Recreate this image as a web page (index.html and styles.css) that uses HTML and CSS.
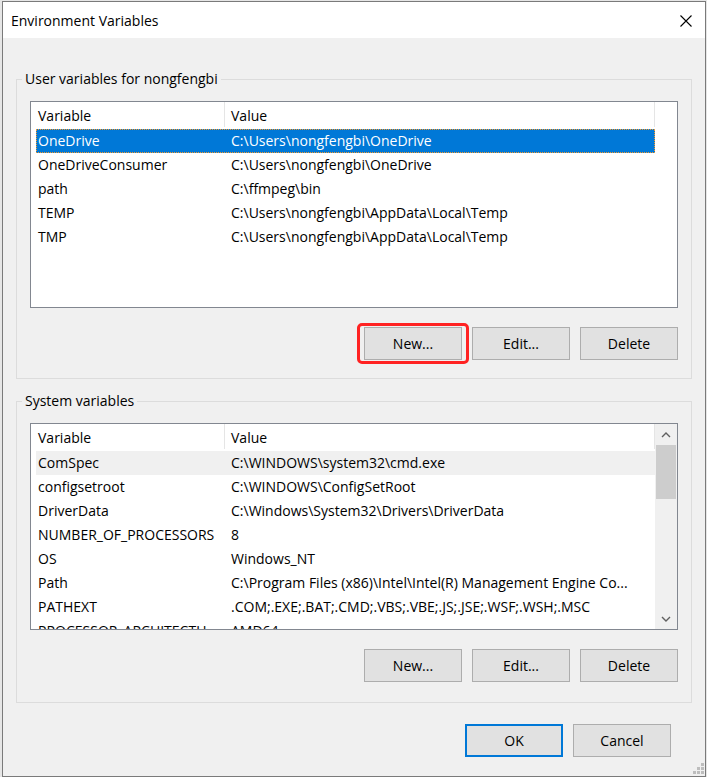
FILE: index.html
```html
<!DOCTYPE html>
<html>
<head>
<meta charset="utf-8">
<link rel="stylesheet" href="styles.css">
</head>
<body>
<div class="window">
  <div class="titlebar">
    <span class="title">Environment Variables</span>
    <svg class="close" width="12" height="12" viewBox="0 0 12 12"><path d="M0.5 0.5 L11.5 11.5 M11.5 0.5 L0.5 11.5" stroke="#000" stroke-width="1.1" fill="none"/></svg>
  </div>
  <div class="content">
    <fieldset class="group g1">
      <legend>User variables for nongfengbi</legend>
      <div class="group-body">
        <div class="list">
          <div class="cols">
            <div class="row head"><div class="c1">Variable</div><div class="c2">Value</div></div>
            <div class="row sel"><div class="c1">OneDrive</div><div class="c2">C:\Users\nongfengbi\OneDrive</div></div>
            <div class="row"><div class="c1">OneDriveConsumer</div><div class="c2">C:\Users\nongfengbi\OneDrive</div></div>
            <div class="row"><div class="c1">path</div><div class="c2">C:\ffmpeg\bin</div></div>
            <div class="row"><div class="c1">TEMP</div><div class="c2">C:\Users\nongfengbi\AppData\Local\Temp</div></div>
            <div class="row"><div class="c1">TMP</div><div class="c2">C:\Users\nongfengbi\AppData\Local\Temp</div></div>
          </div>
        </div>
        <div class="btns">
          <span class="hl"><button class="btn">New...</button></span>
          <button class="btn">Edit...</button>
          <button class="btn">Delete</button>
        </div>
      </div>
    </fieldset>
    <fieldset class="group g2">
      <legend>System variables</legend>
      <div class="group-body">
        <div class="list">
          <div class="cols">
            <div class="row head"><div class="c1">Variable</div><div class="c2">Value</div></div>
            <div class="row hov"><div class="c1">ComSpec</div><div class="c2">C:\WINDOWS\system32\cmd.exe</div></div>
            <div class="row"><div class="c1">configsetroot</div><div class="c2">C:\WINDOWS\ConfigSetRoot</div></div>
            <div class="row"><div class="c1">DriverData</div><div class="c2">C:\Windows\System32\Drivers\DriverData</div></div>
            <div class="row"><div class="c1">NUMBER_OF_PROCESSORS</div><div class="c2">8</div></div>
            <div class="row"><div class="c1">OS</div><div class="c2">Windows_NT</div></div>
            <div class="row"><div class="c1">Path</div><div class="c2">C:\Program Files (x86)\Intel\Intel(R) Management Engine Co...</div></div>
            <div class="row"><div class="c1">PATHEXT</div><div class="c2">.COM;.EXE;.BAT;.CMD;.VBS;.VBE;.JS;.JSE;.WSF;.WSH;.MSC</div></div>
            <div class="row"><div class="c1">PROCESSOR_ARCHITECTU...</div><div class="c2">AMD64</div></div>
          </div>
          <div class="sb">
            <div class="sb-arrow"><svg width="10" height="6" viewBox="0 0 10 6"><path d="M1 5 L5 1 L9 5" stroke="#606060" stroke-width="1.4" fill="none"/></svg></div>
            <div class="sb-thumb"></div>
            <div class="sb-track"></div>
            <div class="sb-arrow"><svg width="10" height="6" viewBox="0 0 10 6"><path d="M1 1 L5 5 L9 1" stroke="#606060" stroke-width="1.4" fill="none"/></svg></div>
          </div>
        </div>
        <div class="btns">
          <button class="btn">New...</button>
          <button class="btn">Edit...</button>
          <button class="btn">Delete</button>
        </div>
      </div>
    </fieldset>
    <div class="dlg-btns">
      <button class="btn default">OK</button>
      <button class="btn">Cancel</button>
    </div>
  </div>
  <svg class="grip" width="11" height="11" viewBox="0 0 11 11" fill="#bdbdbd">
    <rect x="8" y="0" width="3" height="3"/>
    <rect x="4" y="4" width="3" height="3"/><rect x="8" y="4" width="3" height="3"/>
    <rect x="0" y="8" width="3" height="3"/><rect x="4" y="8" width="3" height="3"/><rect x="8" y="8" width="3" height="3"/>
  </svg>
</div>
</body>
</html>
```

FILE: styles.css
```css
html, body {
  margin: 0;
  padding: 0;
}
body {
  background: #e6e6e6;
  font-family: "Open Sans", "Noto Sans", sans-serif;
  font-size: 14px;
  color: #000;
  width: 707px;
  height: 777px;
  overflow: hidden;
}
.window {
  position: relative;
  box-sizing: border-box;
  margin: 1px 0 0 2px;
  width: 704px;
  height: 776px;
  border: 1px solid #7a7a7a;
  background: #f0f0f0;
}
.titlebar {
  height: 36px;
  background: #fff;
  display: flex;
  align-items: center;
  justify-content: space-between;
  padding: 0 13px 0 8px;
}
.title {
  font-size: 14px;
  line-height: 18px;
  padding-top: 1px;
}
.close {
  display: block;
  margin-top: 1px;
}
.content {
  padding: 0 13px;
}
.group {
  margin: 0;
  padding: 0;
  border: 1px solid #dcdcdc;
  min-width: 0;
}
.g1 {
  margin-top: 32px;
}
.g2 {
  margin-top: 13px;
}
.group legend {
  margin-left: 5px;
  padding: 0 3px;
  line-height: 18px;
  font-size: 14px;
}
.group-body {
  padding: 13px 13px 18px;
}
.g2 .group-body {
  padding-bottom: 20px;
}
.list {
  box-sizing: border-box;
  height: 207px;
  border: 1px solid #828790;
  background: #fff;
  display: flex;
  overflow: hidden;
}
.cols {
  flex: none;
  width: 619px;
  margin-left: 5px;
}
.row {
  display: flex;
  height: 24px;
  line-height: 24px;
  white-space: nowrap;
}
.row .c1 {
  box-sizing: border-box;
  width: 189px;
  flex: none;
  padding-left: 2px;
  overflow: hidden;
}
.row .c2 {
  box-sizing: border-box;
  width: 430px;
  flex: none;
  padding-left: 6px;
  overflow: hidden;
}
.row.head {
  height: 27px;
  line-height: 27px;
}
.row.head .c1,
.row.head .c2 {
  border-right: 1px solid #e5e5e5;
  height: 25px;
  line-height: 27px;
}
.row.sel {
  background: #0078d7;
  color: #fff;
  outline: 1px dotted #f59a2c;
  outline-offset: -1px;
}
.row.hov {
  background: #f0f0f0;
}
.sb {
  flex: none;
  width: 22px;
  margin-left: auto;
  background: #f0f0f0;
  display: flex;
  flex-direction: column;
}
.sb-arrow {
  height: 21px;
  display: flex;
  align-items: center;
  justify-content: center;
}
.sb-arrow svg {
  display: block;
}
.sb-thumb {
  height: 54px;
  margin: 0 1px;
  background: #cdcdcd;
}
.sb-track {
  flex: 1;
}
.btns {
  display: flex;
  justify-content: flex-end;
  gap: 10px;
  margin-top: 19px;
}
.btn {
  box-sizing: border-box;
  width: 98px;
  height: 33px;
  margin: 0;
  padding: 0;
  background: #e1e1e1;
  border: 1px solid #adadad;
  border-radius: 0;
  font-family: "Open Sans", "Noto Sans", sans-serif;
  font-size: 14px;
  color: #000;
  display: block;
}
.btn.default {
  border: 2px solid #0078d7;
}
.hl {
  position: relative;
  display: block;
}
.hl::after {
  content: "";
  position: absolute;
  left: -7px;
  right: -7px;
  top: -4px;
  bottom: -4px;
  border: 3px solid #ff2222;
  border-radius: 5px;
  pointer-events: none;
}
.dlg-btns {
  display: flex;
  justify-content: flex-end;
  gap: 10px;
  margin-top: 21px;
  padding-right: 21px;
}
.grip {
  position: absolute;
  right: 1px;
  bottom: 2px;
}
```
